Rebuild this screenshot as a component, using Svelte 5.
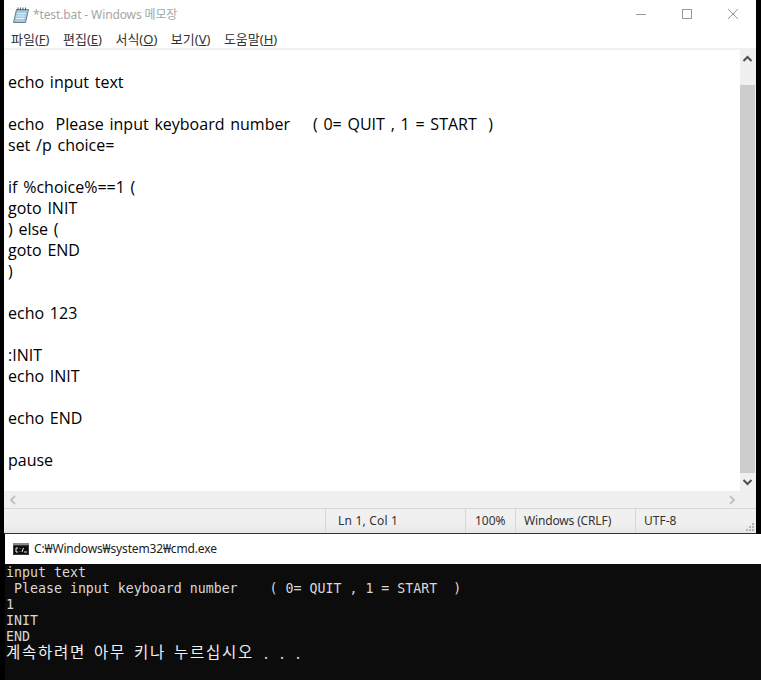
<script>
  const lines = ['', 'echo input text', '', 'echo  Please input keyboard number    ( 0= QUIT , 1 = START  )', 'set /p choice=', '', 'if %choice%==1 (', 'goto INIT', ') else (', 'goto END', ')', '', 'echo 123', '', ':INIT', 'echo INIT', '', 'echo END', '', 'pause'];
  const menus = [['파일', 'F'], ['편집', 'E'], ['서식', 'O'], ['보기', 'V'], ['도움말', 'H']];
  const out = ['input text', ' Please input keyboard number    ( 0= QUIT , 1 = START  )', '1', 'INIT', 'END'];
</script>

<div class="screen">
  <section class="notepad">
    <header class="title">
      <svg class="nicon" width="16" height="17" viewBox="0 0 16 17">
        <path d="M3.500 2.500h12l-3 13H.5z" fill="#a6cbe0" stroke="#64808f" stroke-width="1"/>
        <path d="M4.500 6.500h8M3.800 9h8M3.100 11.500h8" stroke="#e6f1f7" stroke-width="1"/>
        <path d="M5 .5v3M7.500 .5v3M10 .5v3M12.500 .5v3" stroke="#5a5a5a" stroke-width="1"/>
      </svg>
      <span class="ttext">*test.bat - Windows 메모장</span>
      <div class="controls">
        <svg width="46" height="30" viewBox="0 0 46 30"><path d="M18 14.500h10" stroke="#999" fill="none"/></svg>
        <svg width="46" height="30" viewBox="0 0 46 30"><rect x="18.500" y="9.500" width="9" height="9" stroke="#999" fill="none"/></svg>
        <svg width="46" height="30" viewBox="0 0 46 30"><path d="M18 9l10 10M28 9l-10 10" stroke="#999" fill="none"/></svg>
      </div>
    </header>
    <nav class="menu">
      {#each menus as [k, u]}
        <span class="mi">{k}(<u>{u}</u>)</span>
      {/each}
    </nav>
    <div class="body">
      <div class="editor">
        {#each lines as l}
          <div class="line">{l}</div>
        {/each}
      </div>
      <div class="vbar">
        <svg class="arrow" width="15" height="17" viewBox="0 0 15 17"><path d="M3.500 11l4-4 4 4" stroke="#505050" stroke-width="2" fill="none"/></svg>
        <div class="track"><div class="thumb"></div></div>
        <svg class="arrow" width="15" height="18" viewBox="0 0 15 18"><path d="M3.500 7l4 4 4-4" stroke="#505050" stroke-width="2" fill="none"/></svg>
      </div>
    </div>
    <div class="hbar">
      <svg width="17" height="16" viewBox="0 0 17 16"><path d="M11 4l-4 4 4 4" stroke="#c2c2c2" stroke-width="2" fill="none"/></svg>
      <svg width="17" height="16" viewBox="0 0 17 16"><path d="M7 4l4 4-4 4" stroke="#c2c2c2" stroke-width="2" fill="none"/></svg>
    </div>
    <footer class="status">
      <div class="cell c1">Ln 1, Col 1</div>
      <div class="cell c2">100%</div>
      <div class="cell c3">Windows (CRLF)</div>
      <div class="cell c4">UTF-8</div>
      <svg class="grip" width="10" height="10" viewBox="0 0 10 10" fill="#b4b4b4">
        <rect x="7" y="1" width="2" height="2"/><rect x="4" y="4" width="2" height="2"/><rect x="7" y="4" width="2" height="2"/><rect x="1" y="7" width="2" height="2"/><rect x="4" y="7" width="2" height="2"/><rect x="7" y="7" width="2" height="2"/>
      </svg>
    </footer>
  </section>

  <section class="cmd">
    <header class="ctitle">
      <svg width="16" height="12" viewBox="0 0 16 12">
        <rect width="16" height="12" fill="#3a3a3a"/><rect x="0" y="0" width="16" height="2" fill="#8a8a8a"/><rect x="1" y="3" width="14" height="8" fill="#0c0c0c"/>
        <path d="M5 5H3v4h2M7 5.500v.5M7 8v.5M9 9l1.500-4M11 9h3" stroke="#e8e8e8" fill="none"/>
      </svg>
      <span>C:₩Windows₩system32₩cmd.exe</span>
    </header>
    <div class="console">
      {#each out as l}
        <div class="cl">{l}</div>
      {/each}
      <div class="cl"><span class="ko">계속하려면 아무 키나 누르십시오</span> . . .</div>
    </div>
  </section>
</div>

<style>
  :global(body) { margin: 0; background: #000; }
  .screen { width: 761px; height: 680px; display: flex; flex-direction: column; overflow: hidden; background: #000; font-family: "Open Sans", "Noto Sans CJK KR", sans-serif; }
  .notepad { margin: 0 5px 0 4px; background: #fff; display: flex; flex-direction: column; border-bottom: 1px solid #333; flex: none; box-sizing: border-box; height: 534px; }
  .title { height: 30px; display: flex; align-items: center; padding-left: 9px; color: #a6a6a6; font-size: 12px; flex: none; }
  .nicon { margin-right: 4px; }
  .ttext { flex: 1; font-family: "Noto Sans", "Noto Sans CJK KR", sans-serif; letter-spacing: -0.12px; position: relative; top: -1px; }
  .controls { display: flex; }
  .controls svg { display: block; }
  .menu { height: 16px; padding: 0 0 2px 7px; display: flex; gap: 13.5px; font-size: 13px; color: #333; flex: none; align-items: center; font-family: "Noto Sans", "Noto Sans CJK KR", sans-serif; }
  .mi { white-space: pre; }
  .body { flex: none; display: flex; border-top: 2px solid #f0f0f0; height: 441px; }
  .editor { flex: 1; padding: 1px 0 0 4px; font-size: 16px; line-height: 21px; color: #000; overflow: hidden; font-family: "Open Sans", sans-serif; word-spacing: 1.6px; }
  .line { height: 21px; white-space: pre; }
  .vbar { width: 16px; background: #f0f0f0; display: flex; flex-direction: column; }
  .arrow { display: block; flex: none; }
  .track { flex: 1; display: flex; flex-direction: column; padding-top: 18px; }
  .thumb { flex: 1; width: 15px; background: #cdcdcd; }
  .hbar { height: 17px; flex: none; background: #f0f0f0; display: flex; justify-content: space-between; align-items: center; padding-right: 16px; border-bottom: 1px solid #d7d7d7; }
  .hbar svg { display: block; }
  .status { flex: 1; display: flex; background: linear-gradient(#f0f0f0, #f0f0f0 60%, #e6e6e6); font-size: 12px; color: #333; position: relative; font-family: "Noto Sans", sans-serif; padding-left: 321px; align-items: stretch; }
  .cell { border-left: 1px solid #d7d7d7; display: flex; align-items: center; box-sizing: border-box; white-space: pre; padding-bottom: 2px; }
  .c1 { width: 140px; padding-left: 12px; letter-spacing: 0.2px; }
  .c2 { width: 50px; padding-left: 9px; }
  .c3 { width: 120px; padding-left: 8px; letter-spacing: -0.15px; }
  .c4 { flex: 1; padding-left: 8px; }
  .grip { position: absolute; right: 1px; bottom: 1px; }
  .cmd { flex: 1; margin-left: 5px; display: flex; flex-direction: column; min-height: 0; }
  .ctitle { height: 30px; flex: none; background: #fff; display: flex; align-items: center; gap: 5px; padding-left: 8px; font-size: 12px; color: #222; font-family: "Noto Sans", "Noto Sans CJK KR", sans-serif; letter-spacing: -0.15px; }
  .ctitle span { position: relative; top: -1px; }
  .console { flex: 1; background: #0c0c0c; color: #d8d8d8; font-family: "DejaVu Sans Mono", "Noto Sans CJK KR", monospace; font-size: 13.28px; line-height: 16px; }
  .cl { height: 16px; white-space: pre; padding: 0 0 0 1px; position: relative; top: 1px; }
  .ko { font-family: "Noto Sans CJK KR", sans-serif; font-size: 15.5px; line-height: 14px; color: #f0f0f0; letter-spacing: 1.74px; word-spacing: 2.8px; position: relative; top: -1px; }
</style>
